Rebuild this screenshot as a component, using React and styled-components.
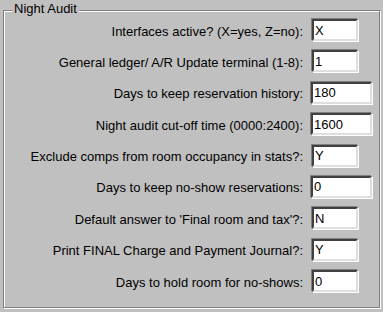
import React from "react";
import styled, { createGlobalStyle } from "styled-components";

const Global = createGlobalStyle`
  html, body { margin: 0; padding: 0; background: #c0c0c0; }
  body { font-family: "Liberation Sans", Arial, sans-serif; font-size: 13px; color: #000; }
`;

const Page = styled.div`
  width: 383px;
  height: 312px;
  box-sizing: border-box;
  padding: 2px 3px 0 3px;
  background: #c0c0c0;
  overflow: hidden;
`;

const Group = styled.fieldset`
  margin: 0;
  padding: 0 7px 15px 0;
  border: 1px solid #808080;
  box-shadow: inset 1px 1px 0 #fff, 1px 1px 0 #fff;
  min-width: 0;
`;

const Legend = styled.legend`
  margin-left: 8px;
  padding: 0 2px 4px 2px;
  line-height: 13px;
  font-size: 13px;
  background: #c0c0c0;
  color: #000;
`;

const Grid = styled.div`
  display: grid;
  grid-template-columns: 1fr 61px;
  grid-auto-rows: 22px;
  column-gap: 8px;
  row-gap: 9.4px;
  align-items: center;
`;

const Label = styled.label`
  text-align: right;
  white-space: nowrap;
  line-height: 15px;
  padding-top: 2px;
`;

const Field = styled.input`
  box-sizing: border-box;
  width: ${(p) => (p.$wide ? "61px" : "46px")};
  height: 22px;
  margin: 0;
  padding: 0 0 0 1px;
  justify-self: start;
  font-family: "Liberation Sans", Arial, sans-serif;
  font-size: 13px;
  color: #000;
  background: #fff;
  border-style: solid;
  border-width: 2px;
  border-color: #404040 #dfdfdf #dfdfdf #404040;
  box-shadow: -1px -1px 0 #808080, 1px 1px 0 #fff;
  outline: none;
  border-radius: 0;
  margin-left: ${(p) => (p.$wide ? "0" : "1px")};
`;

const rows = [
  ["Interfaces active? (X=yes, Z=no):", "X", false],
  ["General ledger/ A/R Update terminal (1-8):", "1", false],
  ["Days to keep reservation history:", "180", true],
  ["Night audit cut-off time (0000:2400):", "1600", true],
  ["Exclude comps from room occupancy in stats?:", "Y", false],
  ["Days to keep no-show reservations:", "0", true],
  ["Default answer to 'Final room and tax'?:", "N", false],
  ["Print FINAL Charge and Payment Journal?:", "Y", false],
  ["Days to hold room for no-shows:", "0", false],
];

export default function App() {
  return (
    <>
      <Global />
      <Page>
        <Group>
          <Legend>Night Audit</Legend>
          <Grid>
            {rows.map(([label, value, wide], i) => (
              <React.Fragment key={i}>
                <Label htmlFor={`f${i}`}>{label}</Label>
                <Field id={`f${i}`} defaultValue={value} $wide={wide} />
              </React.Fragment>
            ))}
          </Grid>
        </Group>
      </Page>
    </>
  );
}
